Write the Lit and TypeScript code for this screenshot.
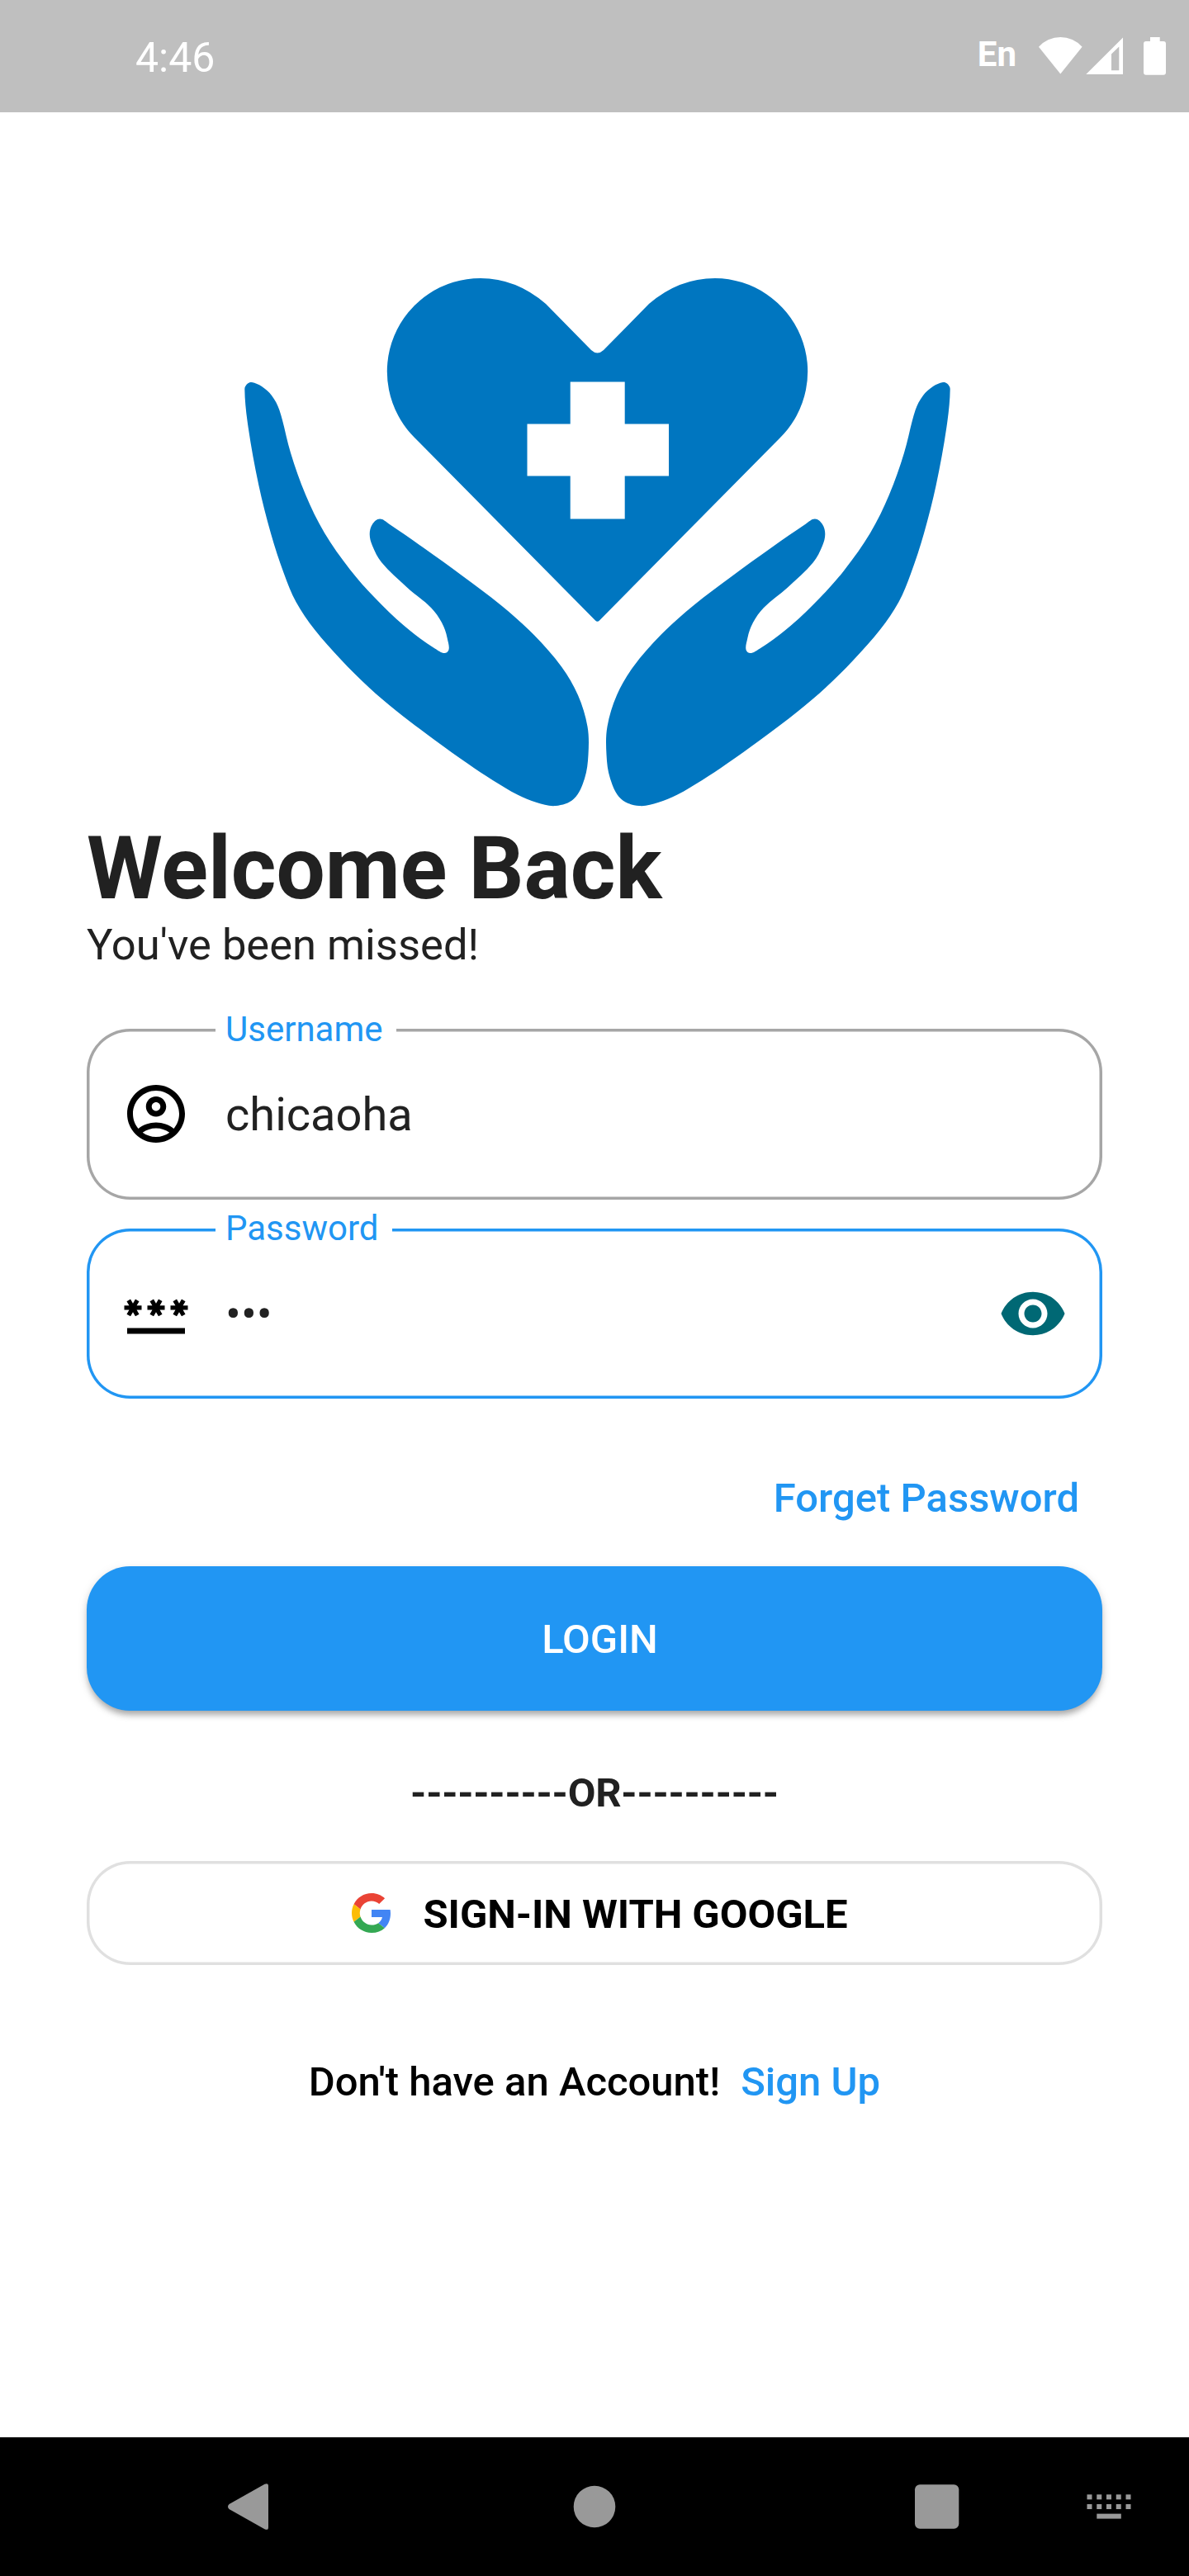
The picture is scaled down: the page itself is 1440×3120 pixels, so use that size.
import { LitElement, html, css, svg, nothing } from "lit";
import { customElement, property } from "lit/decorators.js";

type Point = [number, number];

/* Outline of the left hand; the right hand is its mirror image. */
const HAND: Point[] = [
  [305, 463], [300, 464.5], [296.3, 471], [300.7, 518], [313.3, 587.5], [328, 646],
  [344, 695], [358.5, 729], [381, 762.5], [413, 799], [446.7, 832.5], [480, 861],
  [526.7, 896.5], [566.7, 925], [596.7, 945], [626.7, 962.5], [650, 972],
  [673, 976], [695, 967.5], [708, 943], [712.5, 914], [711.5, 880], [700, 842],
  [680, 807.5], [646.7, 769], [606.7, 733], [560, 697.5], [513, 663.5], [471, 634.5],
  [460, 628.5], [451, 635], [447.7, 647], [451, 661], [462, 681], [493, 711.4],
  [522, 736], [535, 754], [541.7, 773], [541.5, 790], [526.7, 785.5], [489, 757.5],
  [453, 723], [424, 690], [393, 645.5], [370, 599], [352, 548.5], [338.5, 497],
  [329, 479], [317, 468],
];

/* Closed Catmull-Rom curve through the points, written as cubic beziers. */
function smooth(points: Point[]): string {
  const n = points.length;
  const at = (i: number) => points[(i + n) % n];
  let d = `M${points[0][0]} ${points[0][1]}`;
  for (let i = 0; i < n; i++) {
    const [a, b, c, e] = [at(i - 1), at(i), at(i + 1), at(i + 2)];
    const span = Math.hypot(c[0] - b[0], c[1] - b[1]);
    const handle = (p: Point, q: Point) => {
      const len = Math.hypot(q[0] - p[0], q[1] - p[1]) || 1;
      return [((q[0] - p[0]) / len) * span * 0.34, ((q[1] - p[1]) / len) * span * 0.34];
    };
    const h1 = handle(a, c);
    const h2 = handle(b, e);
    d += `C${b[0] + h1[0]} ${b[1] + h1[1]} ${c[0] - h2[0]} ${c[1] - h2[1]} ${c[0]} ${c[1]}`;
  }
  return d + "Z";
}

const accountIcon = svg`<path d="M12 2C6.48 2 2 6.48 2 12s4.48 10 10 10 10-4.48 10-10S17.52 2 12 2zM7.35 18.5C8.66 17.56 10.26 17 12 17s3.34.56 4.65 1.5C15.34 19.44 13.74 20 12 20s-3.34-.56-4.65-1.5zm10.79-1.38C16.45 15.8 14.32 15 12 15s-4.45.8-6.14 2.12C4.7 15.73 4 13.95 4 12c0-4.42 3.58-8 8-8s8 3.58 8 8c0 1.95-.7 3.73-1.86 5.12z"/><path d="M12 6c-1.93 0-3.5 1.57-3.5 3.5S10.07 13 12 13s3.5-1.57 3.5-3.5S13.93 6 12 6zm0 5c-.83 0-1.5-.67-1.5-1.5S11.17 8 12 8s1.5.67 1.5 1.5S12.83 11 12 11z"/>`;

const passwordIcon = svg`<path d="M2 17h20v2H2v-2zm1.15-4.05L4 11.47l.85 1.48 1.3-.75-.85-1.48H7v-1.5H5.3l.85-1.47L4.85 7 4 8.47 3.15 7l-1.3.75.85 1.47H1v1.5h1.7l-.85 1.48 1.3.75zm6.7-.75 1.3.75.85-1.48.85 1.48 1.3-.75-.85-1.48H15v-1.5h-1.7l.85-1.47-1.3-.75L12 8.47 11.15 7l-1.3.75.85 1.47H9v1.5h1.7l-.85 1.48zM23 9.22h-1.7l.85-1.47-1.3-.75L20 8.47 19.15 7l-1.3.75.85 1.47H17v1.5h1.7l-.85 1.48 1.3.75.85-1.48.85 1.48 1.3-.75-.85-1.48H23v-1.5z"/>`;

const eyeIcon = svg`<path d="M12 4.5C7 4.5 2.73 7.61 1 12c1.73 4.39 6 7.5 11 7.5s9.27-3.11 11-7.5c-1.73-4.39-6-7.5-11-7.5zM12 17c-2.76 0-5-2.24-5-5s2.24-5 5-5 5 2.24 5 5-2.24 5-5 5zm0-8c-1.66 0-3 1.34-3 3s1.34 3 3 3 3-1.34 3-3-1.34-3-3-3z"/>`;

@customElement("outlined-field")
export class OutlinedField extends LitElement {
  @property() label = "";
  @property() value = "";
  @property({ attribute: false }) icon: unknown = nothing;
  @property({ attribute: false }) trailing: unknown = nothing;
  @property({ type: Boolean, reflect: true }) focused = false;

  static styles = css`
    :host {
      display: block;
    }
    .box {
      position: relative;
      box-sizing: border-box;
      height: 206.5px;
      display: flex;
      align-items: center;
      padding: 0 42px;
      box-shadow: inset 0 0 0 3.5px #a6a6a6;
      border-radius: 52.5px;
    }
    :host([focused]) .box {
      box-shadow: inset 0 0 0 3.5px #2196f3;
    }
    .label {
      position: absolute;
      left: 156px;
      top: -20.5px;
      padding: 0 16px 0 12px;
      background: #fff;
      color: #2196f3;
      font-size: 42px;
      line-height: 42px;
      white-space: nowrap;
    }
    .icon {
      width: 84px;
      height: 84px;
      flex: none;
    }
    .value {
      flex: 1;
      padding: 2px 0 0 42px;
      color: #212121;
      font-size: 56px;
      line-height: 66px;
    }
    .trailing {
      fill: #006874;
    }
  `;

  render() {
    return html`
      <div class="box">
        <span class="label">${this.label}</span>
        <svg class="icon" viewBox="0 0 24 24">${this.icon}</svg>
        <span class="value">${this.value}</span>
        ${this.trailing === nothing
          ? nothing
          : html`<svg class="icon trailing" viewBox="0 0 24 24">${this.trailing}</svg>`}
      </div>
    `;
  }
}

@customElement("app-root")
export class AppRoot extends LitElement {
  static styles = css`
    :host {
      display: flex;
      flex-direction: column;
      width: 1440px;
      height: 3120px;
      background: #fff;
      color: #212121;
      font-family: Roboto, "Liberation Sans", sans-serif;
      overflow: hidden;
      white-space: nowrap;
    }
    .status {
      box-sizing: border-box;
      height: 136px;
      display: flex;
      align-items: center;
      padding: 0 0 0 164px;
      background: #bfbfbf;
      color: #fff;
    }
    .time {
      font-size: 50px;
      line-height: 60px;
      padding-top: 4px;
    }
    .lang {
      margin-left: auto;
      font-size: 42px;
      line-height: 50px;
      font-weight: 700;
      padding-bottom: 4px;
    }
    .signals {
      width: 160px;
      height: 136px;
      margin-left: 25px;
      margin-right: 24px;
    }
    .hero {
      display: block;
      width: 1440px;
      height: 855px;
      fill: #0076c0;
    }
    .content {
      flex: 1;
      display: flex;
      flex-direction: column;
      padding: 0 105px;
    }
    .title {
      margin: 0;
      font-size: 105px;
      line-height: 124px;
      font-weight: 700;
    }
    .subtitle {
      margin: 0 0 73px;
      font-size: 52.5px;
      line-height: 58px;
    }
    .fields {
      display: flex;
      flex-direction: column;
      gap: 35px;
    }
    .forget {
      align-self: flex-end;
      margin: 91.5px 28px 53.5px 0;
      font-size: 49px;
      line-height: 58px;
      font-weight: 500;
      color: #2196f3;
    }
    .login {
      box-sizing: border-box;
      height: 175px;
      display: flex;
      align-items: center;
      justify-content: center;
      padding: 2px 0 0 13px;
      border-radius: 52.5px;
      background: #2196f3;
      color: #fff;
      font-size: 49px;
      font-weight: 500;
      box-shadow: 0 7px 7px -3px rgba(0, 0, 0, 0.2), 0 5px 8px rgba(0, 0, 0, 0.14), 0 3px 14px rgba(0, 0, 0, 0.08);
    }
    .or {
      margin: 70.5px 0 53.5px;
      font-size: 49px;
      line-height: 58px;
      font-weight: 700;
      letter-spacing: -0.25px;
      text-align: center;
    }
    .google {
      box-sizing: border-box;
      height: 126px;
      display: flex;
      align-items: center;
      padding-left: 320.5px;
      gap: 39px;
      box-shadow: inset 0 0 0 3.5px #e0e0e0;
      border-radius: 52.5px;
      color: #000;
      font-size: 49px;
      font-weight: 700;
      letter-spacing: -0.05px;
    }
    .google-label {
      padding-top: 2px;
    }
    .g {
      width: 48px;
      height: 48px;
    }
    .signup {
      display: flex;
      justify-content: center;
      gap: 25px;
      margin-top: 112.5px;
      font-size: 49px;
      line-height: 58px;
      font-weight: 500;
      color: #000;
    }
    .link {
      color: #2196f3;
    }
    .nav {
      height: 168px;
      background: #000;
    }
    .keys {
      display: block;
      width: 1440px;
      height: 168px;
      fill: #999;
    }
  `;

  render() {
    const hand = smooth(HAND);
    return html`
      <header class="status">
        <span class="time">4:46</span>
        <span class="lang">En</span>
        <svg class="signals" viewBox="1256 0 160 136" fill="#fff">
          <path d="M1284.300 89.500 1258 56.800A35.200 35.200 0 0 1 1310.600 56.800Z" />
          <path fill-rule="evenodd" d="M1360 45.500V90H1315.300ZM1355.300 56.500 1346 65.500V85.300H1355.300Z" />
          <path d="M1393 45H1404.700V50H1409Q1412 50 1412 53V87.700Q1412 90.700 1409 90.700H1388Q1385 90.700 1385 87.700V53Q1385 50 1388 50H1393Z" />
        </svg>
      </header>
      <svg class="hero" viewBox="0 136 1440 855">
        <path
          fill-rule="evenodd"
          d="M502 530A113 113 0 0 1 582 337Q625 337 661 368L716 424Q723.5 431 731 424L786 368Q822 337 866 337A113 113 0 0 1 945 530L726 751.500Q723.500 754 721 751.500ZM690.700 462.600V513.500H638.500V576.500H690.700V628.500H756.700V576.500H810V513.500H756.700V462.600Z"
        />
        <path d=${hand} />
        <path d=${hand} transform="translate(1447 0) scale(-1 1)" />
      </svg>
      <main class="content">
        <h1 class="title">Welcome Back</h1>
        <p class="subtitle">You've been missed!</p>
        <div class="fields">
          <outlined-field label="Username" value="chicaoha" .icon=${accountIcon}></outlined-field>
          <outlined-field focused label="Password" value="•••" .icon=${passwordIcon} .trailing=${eyeIcon}></outlined-field>
        </div>
        <span class="forget">Forget Password</span>
        <div class="login">LOGIN</div>
        <div class="or">----------OR----------</div>
        <div class="google">
          <svg class="g" viewBox="0 0 48 48">
            <path fill="#EA4335" d="M24 9.5c3.54 0 6.71 1.22 9.21 3.6l6.85-6.85C35.9 2.38 30.47 0 24 0 14.62 0 6.51 5.38 2.56 13.22l7.98 6.19C12.43 13.72 17.74 9.5 24 9.5z" />
            <path fill="#4285F4" d="M46.98 24.55c0-1.57-.15-3.09-.38-4.55H24v9.02h12.94c-.58 2.96-2.26 5.48-4.78 7.18l7.73 6c4.51-4.18 7.09-10.36 7.09-17.65z" />
            <path fill="#FBBC05" d="M10.53 28.59c-.48-1.45-.76-2.99-.76-4.59s.27-3.14.76-4.59l-7.98-6.19C.92 16.46 0 20.12 0 24c0 3.88.92 7.54 2.56 10.78l7.97-6.19z" />
            <path fill="#34A853" d="M24 48c6.48 0 11.93-2.13 15.89-5.81l-7.73-6c-2.15 1.45-4.92 2.3-8.16 2.3-6.26 0-11.57-4.22-13.47-9.91l-7.98 6.19C6.51 42.62 14.62 48 24 48z" />
          </svg>
          <span class="google-label">SIGN-IN WITH GOOGLE</span>
        </div>
        <div class="signup">
          <span>Don't have an Account!</span>
          <span class="link">Sign Up</span>
        </div>
      </main>
      <footer class="nav">
        <svg class="keys" viewBox="0 2952 1440 168">
          <path d="M277.500 3033 320.500 3008.800Q325 3006.800 325 3011V3061Q325 3065.200 320.500 3063.200L277.500 3039Q274.500 3036 277.500 3033Z" />
          <circle cx="720" cy="3036" r="25.300" />
          <rect x="1108" y="3009.300" width="53.300" height="53.400" rx="6" />
          ${[0, 1, 2, 3, 4].map(
            (i) => svg`<rect x=${1316.5 + i * 11.75} y="3021.3" width="6" height="6" /><rect x=${1316.5 + i * 11.75} y="3033" width="6" height="6" />`
          )}
          <rect x="1328.300" y="3044.600" width="29.500" height="6" />
        </svg>
      </footer>
    `;
  }
}
